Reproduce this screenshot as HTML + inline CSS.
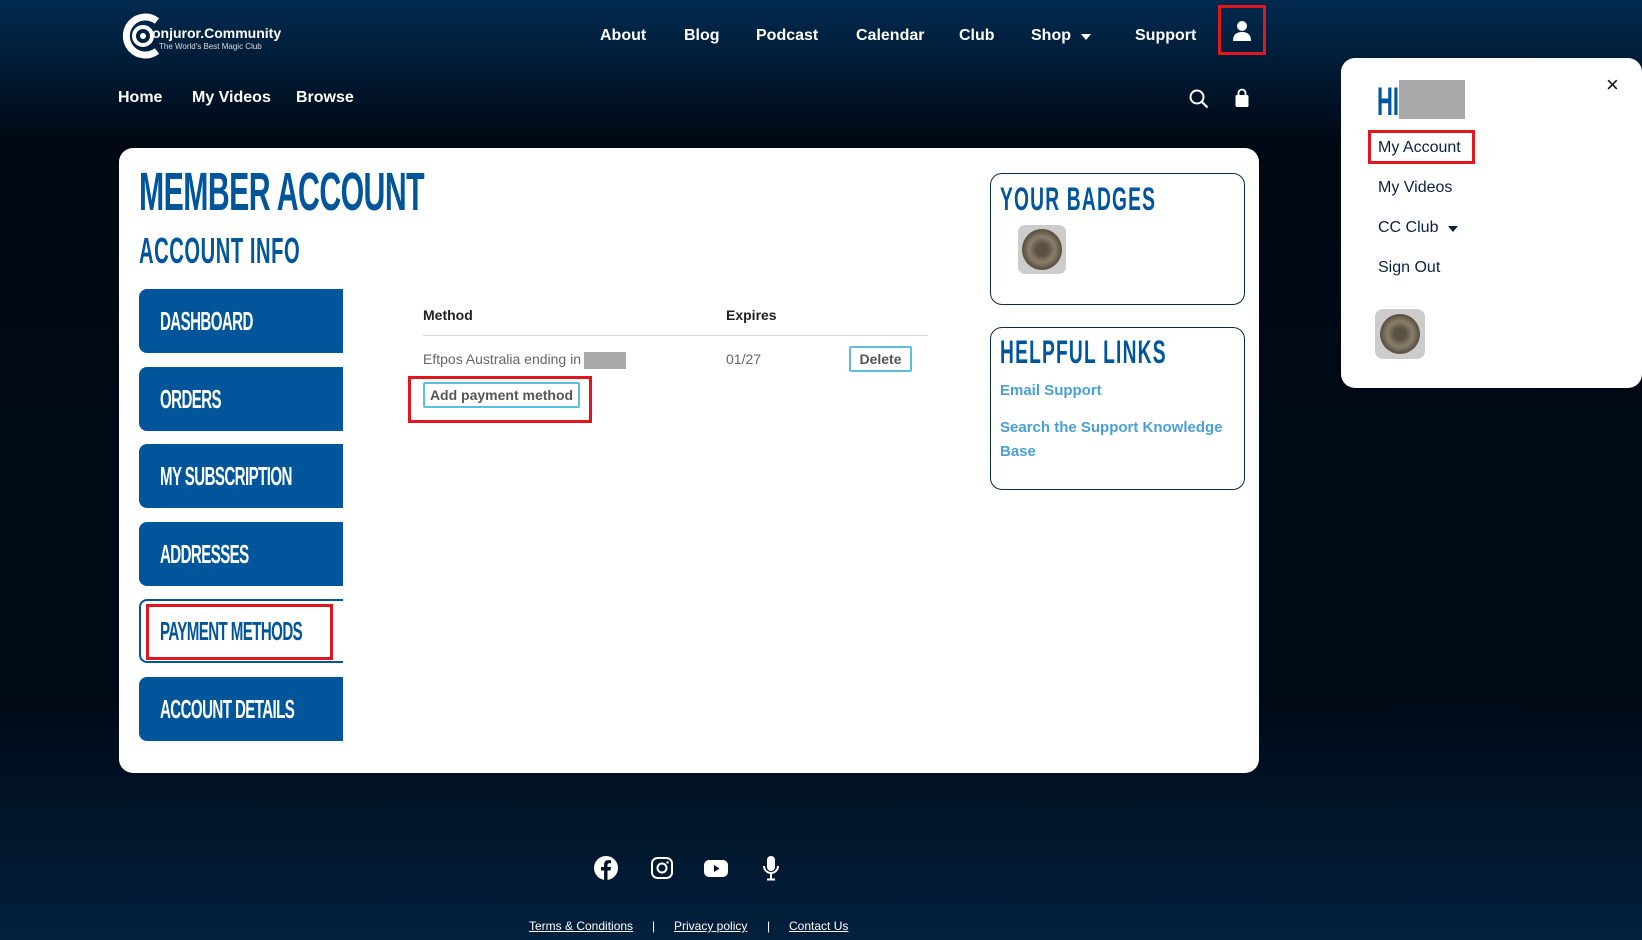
<!DOCTYPE html>
<html><head><meta charset="utf-8"><style>
*{margin:0;padding:0;box-sizing:border-box}
body{width:1642px;height:940px;overflow:hidden;font-family:"Liberation Sans",sans-serif;background:linear-gradient(180deg,#022a4f 0px,#011a33 70px,#000814 140px,#000a17 700px,#02203d 940px);position:relative;color:#fff}
.a{position:absolute;white-space:nowrap}
.nav{font-weight:bold;font-size:16px;color:#fff;top:27px}
.sub{font-weight:bold;font-size:16px;color:#fff;top:89px}
.cond{display:inline-block;transform-origin:0 0;font-weight:bold}
.card{left:119px;top:148px;width:1140px;height:625px;background:#fff;border-radius:14px}
.btn{left:139px;width:204px;height:64px;background:#00559b;border-radius:8px 0 0 8px}
.btn span{position:absolute;left:21px;top:17px;font-size:26px;color:#fff;font-weight:bold;transform:scaleX(.58);transform-origin:0 0;letter-spacing:-1px}
.box{border:1.5px solid #0a2a4a;border-radius:12px;background:#fff}
.t{color:#222;font-size:14px}
.lnk{color:#4aa0d5;font-size:15px;font-weight:bold}
.pm{color:#0a2240;font-size:16px}
.foot{font-size:12px;color:#fff;text-decoration:underline;top:919px}
</style></head><body>
<svg class="a" style="left:119px;top:13px" width="48" height="46" viewBox="0 0 48 46"><path d="M38 8 A19 19 0 1 0 38 38" stroke="#fff" stroke-width="7" fill="none"/><circle cx="24" cy="23" r="9" fill="none" stroke="#fff" stroke-width="4"/><circle cx="24" cy="23" r="3" fill="#fff"/></svg>
<div class="a" style="left:152px;top:25px;font-size:14px;font-weight:bold">onjuror.Community</div>
<div class="a" style="left:159px;top:42px;font-size:8px;color:#ddd">The World's Best Magic Club</div>

<div class="a nav" style="left:600px">About</div>
<div class="a nav" style="left:684px">Blog</div>
<div class="a nav" style="left:756px">Podcast</div>
<div class="a nav" style="left:856px">Calendar</div>
<div class="a nav" style="left:959px">Club</div>
<div class="a nav" style="left:1031px">Shop</div>
<div class="a" style="left:1081px;top:34px;border:5px solid transparent;border-top:6px solid #fff;border-bottom:0"></div>
<div class="a nav" style="left:1135px">Support</div>
<div class="a" style="left:1218px;top:5px;width:48px;height:50px;border:3px solid #e0171f"></div>
<svg class="a" style="left:1232px;top:20px" width="20" height="22" viewBox="0 0 20 22"><circle cx="10" cy="6" r="5" fill="#fff"/><path d="M1 21 Q1 12 10 12 Q19 12 19 21Z" fill="#fff"/></svg>

<div class="a sub" style="left:118px">Home</div>
<div class="a sub" style="left:192px">My Videos</div>
<div class="a sub" style="left:296px">Browse</div>
<svg class="a" style="left:1189px;top:89px" width="20" height="20" viewBox="0 0 20 20"><circle cx="8" cy="8" r="6.5" stroke="#fff" stroke-width="2" fill="none"/><path d="M13 13 L18.5 18.5" stroke="#fff" stroke-width="2.2"/></svg>
<svg class="a" style="left:1234px;top:88px" width="16" height="20" viewBox="0 0 16 20"><path d="M4.5 7 V5 a3.5 3.5 0 0 1 7 0 V7" stroke="#fff" stroke-width="1.8" fill="none"/><rect x="1.5" y="7" width="13" height="12" rx="1.5" fill="#fff"/></svg>

<div class="a card"></div>
<div class="a" style="left:139px;top:161px;color:#00559b"><span class="cond" style="font-size:54px;transform:scaleX(.56);letter-spacing:-1px">MEMBER ACCOUNT</span></div>
<div class="a" style="left:139px;top:230px;color:#00559b"><span class="cond" style="font-size:36px;transform:scaleX(.56);letter-spacing:1px">ACCOUNT INFO</span></div>

<div class="a btn" style="top:289px"><span>DASHBOARD</span></div>
<div class="a btn" style="top:367px"><span>ORDERS</span></div>
<div class="a btn" style="top:444px"><span>MY SUBSCRIPTION</span></div>
<div class="a btn" style="top:522px"><span>ADDRESSES</span></div>
<div class="a btn" style="top:599px;background:#fff;border:2px solid #00559b;border-right:0"><span style="color:#00559b;left:19px;top:15px">PAYMENT METHODS</span></div>
<div class="a" style="left:146px;top:604px;width:187px;height:56px;border:3px solid #e0171f"></div>
<div class="a btn" style="top:677px"><span>ACCOUNT DETAILS</span></div>

<div class="a t" style="left:423px;top:307px;font-weight:bold">Method</div>
<div class="a t" style="left:726px;top:307px;font-weight:bold">Expires</div>
<div class="a" style="left:423px;top:335px;width:505px;height:1px;background:#d8d8d8"></div>
<div class="a t" style="left:423px;top:351px;color:#666">Eftpos Australia ending in</div>
<div class="a" style="left:584px;top:352px;width:42px;height:17px;background:#a9a9ab"></div>
<div class="a t" style="left:726px;top:351px;color:#666">01/27</div>
<div class="a" style="left:849px;top:346px;width:63px;height:26px;border:2px solid #5bc0de;border-radius:2px;color:#555;font-size:14px;font-weight:bold;text-align:center;line-height:22px">Delete</div>
<div class="a" style="left:423px;top:382px;width:157px;height:26px;border:2px solid #5bc0de;border-radius:2px;color:#555;font-size:14px;font-weight:bold;text-align:center;line-height:22px">Add payment method</div>
<div class="a" style="left:408px;top:376px;width:184px;height:47px;border:3px solid #e0171f"></div>

<div class="a box" style="left:990px;top:173px;width:255px;height:132px"></div>
<div class="a" style="left:1000px;top:181px;color:#00559b"><span class="cond" style="font-size:32px;transform:scaleX(.6);letter-spacing:2px">YOUR BADGES</span></div>
<div class="a" style="left:1018px;top:225px;width:48px;height:49px;background:#ccc;border-radius:7px"><div style="margin:4px;width:40px;height:41px;border-radius:50%;background:radial-gradient(circle,#5a5142 20%,#8a7f6a 45%,#4d4436 75%,#9a917e 100%)"></div></div>

<div class="a box" style="left:990px;top:327px;width:255px;height:163px"></div>
<div class="a" style="left:1000px;top:334px;color:#00559b"><span class="cond" style="font-size:32px;transform:scaleX(.6);letter-spacing:2px">HELPFUL LINKS</span></div>
<div class="a lnk" style="left:1000px;top:382px">Email Support</div>
<div class="a lnk" style="left:1000px;top:419px">Search the Support Knowledge</div>
<div class="a lnk" style="left:1000px;top:443px">Base</div>

<div class="a" style="left:1341px;top:58px;width:301px;height:330px;background:#fff;border-radius:14px"></div>
<div class="a" style="left:1606px;top:72px;color:#111;font-size:22px">×</div>
<div class="a" style="left:1377px;top:80px;color:#00559b"><span class="cond" style="font-size:40px;transform:scaleX(.55)">HI</span></div>
<div class="a" style="left:1399px;top:80px;width:66px;height:39px;background:#a9a9ab"></div>
<div class="a" style="left:1368px;top:130px;width:107px;height:34px;border:3px solid #e0171f"></div>
<div class="a pm" style="left:1378px;top:139px">My Account</div>
<div class="a pm" style="left:1378px;top:179px">My Videos</div>
<div class="a pm" style="left:1378px;top:219px">CC Club</div>
<div class="a" style="left:1448px;top:226px;border:5px solid transparent;border-top:6px solid #0a2240;border-bottom:0"></div>
<div class="a pm" style="left:1378px;top:259px">Sign Out</div>
<div class="a" style="left:1375px;top:309px;width:50px;height:50px;background:#ccc;border-radius:8px"><div style="margin:5px;width:40px;height:40px;border-radius:50%;background:radial-gradient(circle,#5a5142 20%,#8a7f6a 45%,#4d4436 75%,#9a917e 100%)"></div></div>

<svg class="a" style="left:594px;top:856px" width="24" height="24" viewBox="0 0 24 24"><circle cx="12" cy="12" r="12" fill="#fff"/><path d="M13.5 24 V14.5 H16.5 L17 11 H13.5 V9 c0-1 .4-1.7 1.8-1.7 H17 V4.3 c-.5-.1-1.5-.2-2.6-.2 -2.6 0-4.3 1.5-4.3 4.4 V11 H7 v3.5 h3.1 V24Z" fill="#011326"/></svg>
<svg class="a" style="left:651px;top:857px" width="22" height="22" viewBox="0 0 22 22"><rect x="1" y="1" width="20" height="20" rx="5.5" stroke="#fff" stroke-width="2" fill="none"/><circle cx="11" cy="11" r="4.5" stroke="#fff" stroke-width="2" fill="none"/><circle cx="16.5" cy="5.5" r="1.2" fill="#fff"/></svg>
<svg class="a" style="left:704px;top:860px" width="24" height="17" viewBox="0 0 24 17"><rect width="24" height="17" rx="5" fill="#fff"/><path d="M10 5 L15.5 8.5 L10 12Z" fill="#011326"/></svg>
<svg class="a" style="left:762px;top:855px" width="18" height="26" viewBox="0 0 18 26"><rect x="5" y="1" width="8" height="15" rx="4" fill="#fff"/><path d="M2 11 a7 7 0 0 0 14 0" stroke="#fff" stroke-width="2" fill="none"/><path d="M9 18 V24 M5 24.5 H13" stroke="#fff" stroke-width="2"/></svg>

<div class="a foot" style="left:529px">Terms &amp; Conditions</div>
<div class="a foot" style="left:652px;text-decoration:none">|</div>
<div class="a foot" style="left:674px">Privacy policy</div>
<div class="a foot" style="left:767px;text-decoration:none">|</div>
<div class="a foot" style="left:789px">Contact Us</div>
</body></html>
